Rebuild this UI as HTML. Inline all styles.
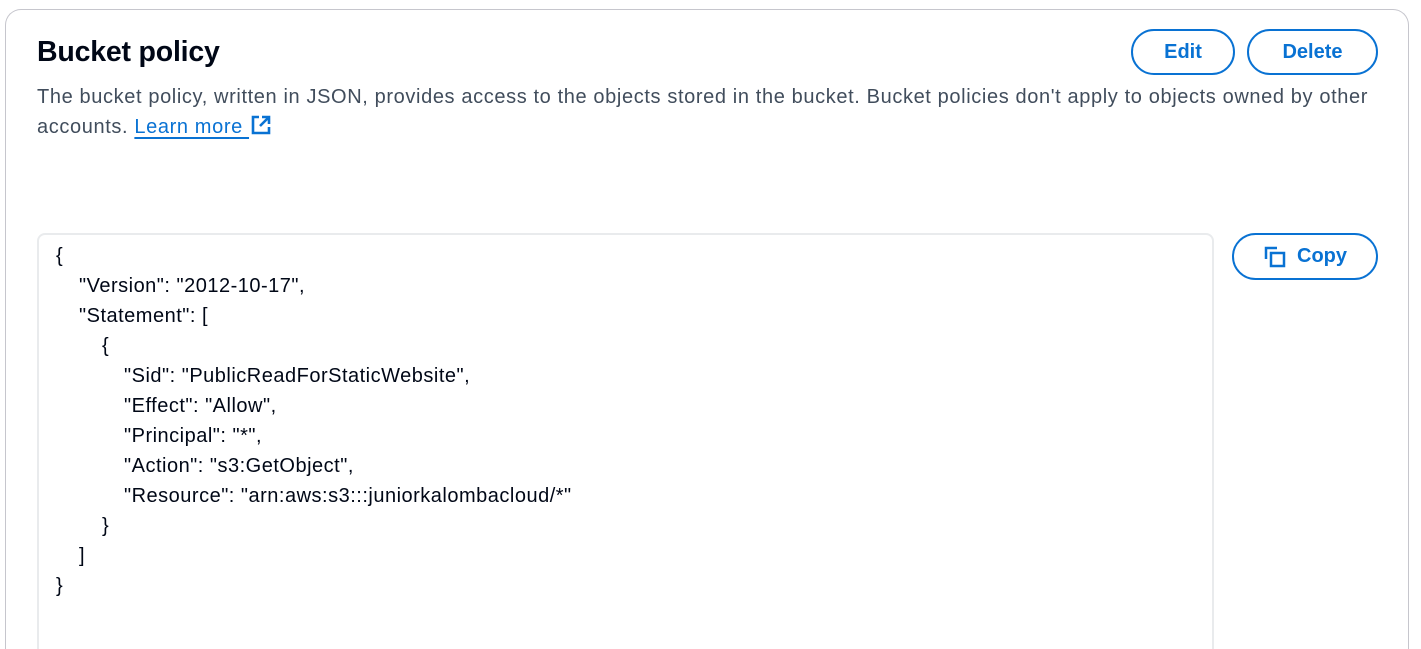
<!DOCTYPE html>
<html><head><meta charset="utf-8"><style>
*{margin:0;padding:0;box-sizing:border-box}
html,body{width:1421px;height:649px;overflow:hidden}
body{background:#fff;font-family:"Liberation Sans",sans-serif;color:#000716;position:relative}
.card{position:absolute;left:5px;top:9px;width:1404px;height:640px;border:1px solid #c6c6cd;border-bottom:none;border-radius:16px 16px 0 0}
h1{position:absolute;left:37px;top:36px;font-size:28.5px;font-weight:bold;letter-spacing:-0.2px}
.desc{position:absolute;left:37px;top:82px;width:1345px;font-size:20px;letter-spacing:0.62px;line-height:30px;color:#414d5c}
.desc a{color:#0972d3;text-decoration:underline;text-underline-offset:4px}
.btn{position:absolute;border:2px solid #0972d3;border-radius:24px;color:#0972d3;font-weight:bold;font-size:20px;display:flex;align-items:center;justify-content:center;background:#fff}
.code{position:absolute;left:37px;top:233px;width:1177px;height:416px;border:2px solid #e9ebed;border-bottom:none;border-radius:8px 8px 0 0}
.lines{position:absolute;left:17px;top:6px;font-size:20px;letter-spacing:0.5px;line-height:30px;color:#000716;white-space:nowrap}
.l1{padding-left:23px}.l2{padding-left:46px}.l3{padding-left:68px}
</style></head><body>
<div class="card"></div>
<h1>Bucket policy</h1>
<div class="desc">The bucket policy, written in JSON, provides access to the objects stored in the bucket. Bucket policies don't apply to objects owned by other accounts. <a>Learn more&nbsp;</a><svg width="22" height="22" viewBox="0 0 22 22" style="vertical-align:-3px;margin-left:1px"><path d="M9 3H3v16h16v-6" fill="none" stroke="#0972d3" stroke-width="2.6"/><path d="M12 3h7v7M19 3l-9 9" fill="none" stroke="#0972d3" stroke-width="2.6"/></svg></div>
<div class="btn" style="left:1131px;top:29px;width:104px;height:46px">Edit</div>
<div class="btn" style="left:1247px;top:29px;width:131px;height:46px">Delete</div>
<div class="btn" style="left:1232px;top:233px;width:146px;height:47px"><svg width="24" height="24" viewBox="0 0 24 24" style="margin-right:10px"><path d="M3 14V3h11" fill="none" stroke="#0972d3" stroke-width="2.5"/><rect x="8" y="8" width="13" height="13" fill="none" stroke="#0972d3" stroke-width="2.5"/></svg>Copy</div>
<div class="code"><div class="lines"><div>{</div><div class="l1">"Version": "2012-10-17",</div><div class="l1">"Statement": [</div><div class="l2">{</div><div class="l3">"Sid": "PublicReadForStaticWebsite",</div><div class="l3">"Effect": "Allow",</div><div class="l3">"Principal": "*",</div><div class="l3">"Action": "s3:GetObject",</div><div class="l3">"Resource": "arn:aws:s3:::juniorkalombacloud/*"</div><div class="l2">}</div><div class="l1">]</div><div>}</div></div></div>
</body></html>
